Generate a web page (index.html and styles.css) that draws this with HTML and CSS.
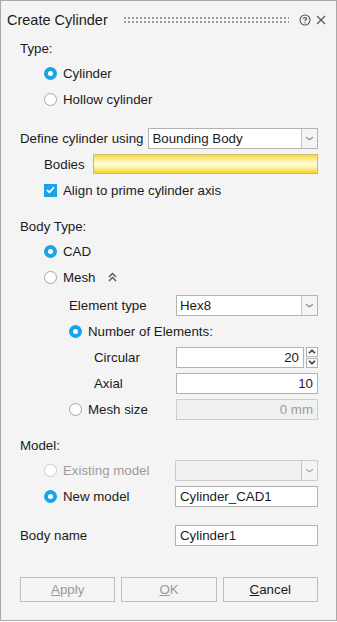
FILE: index.html
```html
<!DOCTYPE html>
<html lang="en">
<head>
    <meta charset="UTF-8" />
    <title>Create Cylinder</title>
    <link rel="stylesheet" href="styles.css">
</head>
<body>
<div class="dialog">
    <div class="titlebar">
        <span class="title">Create Cylinder</span>
        <span class="grip"></span>
        <svg class="help" width="12" height="12" viewBox="0 0 12 12">
            <circle cx="6" cy="6" r="5" fill="none" stroke="#555" stroke-width="1.1"/>
            <path d="M4.3 4.7 C4.3 3.3 7.7 3.3 7.7 4.7 C7.7 5.8 6 5.8 6 7.1" fill="none" stroke="#555" stroke-width="1.1"/>
            <circle cx="6" cy="8.7" r="0.7" fill="#555"/>
        </svg>
        <svg class="close" width="10" height="10" viewBox="0 0 10 10">
            <path d="M1 1 L9 9 M9 1 L1 9" stroke="#555" stroke-width="1.2"/>
        </svg>
    </div>

    <div class="content">
        <div class="heading">Type:</div>
        <div class="row indent"><span class="radio on"></span>Cylinder</div>
        <div class="row indent"><span class="radio"></span>Hollow cylinder</div>

        <div class="row section">
            <span class="lbl-auto">Define cylinder using</span>
            <div class="combo"><span class="value">Bounding Body</span><span class="drop"><svg width="7" height="5" viewBox="0 0 7 5"><path d="M0 0.5 L3.5 3 L7 0.5 L7 2 L3.5 4.5 L0 2Z" fill="#8a8a8a"/></svg></span></div>
        </div>
        <div class="row indent">
            <span class="lbl-bodies">Bodies</span>
            <div class="picker"></div>
        </div>
        <div class="row indent">
            <span class="check"><svg width="9" height="8" viewBox="0 0 9 8"><path d="M1 4 L3.5 6.3 L8 1.3" fill="none" stroke="#fff" stroke-width="1.7"/></svg></span>Align to prime cylinder axis
        </div>

        <div class="heading section">Body Type:</div>
        <div class="row indent"><span class="radio on"></span>CAD</div>
        <div class="row indent"><span class="radio"></span>Mesh
            <svg class="collapse" width="9" height="10" viewBox="0 0 9 10"><path d="M1 5 L4.5 1.6 L8 5 M1 9 L4.5 5.6 L8 9" fill="none" stroke="#555" stroke-width="1.4"/></svg>
        </div>

        <div class="mesh">
            <div class="row sub">
                <span class="lbl-sub">Element type</span>
                <div class="combo"><span class="value">Hex8</span><span class="drop"><svg width="7" height="5" viewBox="0 0 7 5"><path d="M0 0.5 L3.5 3 L7 0.5 L7 2 L3.5 4.5 L0 2Z" fill="#8a8a8a"/></svg></span></div>
            </div>
            <div class="row sub"><span class="radio on"></span>Number of Elements:</div>
            <div class="row sub2">
                <span class="lbl-sub2">Circular</span>
                <div class="input num">20</div>
                <div class="spin">
                    <span class="spin-btn"><svg width="8" height="5" viewBox="0 0 8 5"><path d="M1 4.2 L4 1.2 L7 4.2" fill="none" stroke="#333" stroke-width="1.5"/></svg></span>
                    <span class="spin-btn"><svg width="8" height="5" viewBox="0 0 8 5"><path d="M1 0.8 L4 3.8 L7 0.8" fill="none" stroke="#333" stroke-width="1.5"/></svg></span>
                </div>
            </div>
            <div class="row sub2">
                <span class="lbl-sub2">Axial</span>
                <div class="input num">10</div>
            </div>
            <div class="row sub">
                <span class="radio"></span><span class="lbl-msize">Mesh size</span>
                <div class="input num disabled">0 mm</div>
            </div>
        </div>

        <div class="heading section">Model:</div>
        <div class="row indent muted">
            <span class="radio off"></span><span class="lbl-model">Existing model</span>
            <div class="combo disabled"><span class="value"></span><span class="drop"><svg width="7" height="5" viewBox="0 0 7 5"><path d="M0 0.5 L3.5 3 L7 0.5 L7 2 L3.5 4.5 L0 2Z" fill="#aaa"/></svg></span></div>
        </div>
        <div class="row indent">
            <span class="radio on"></span><span class="lbl-model">New model</span>
            <div class="input">Cylinder_CAD1</div>
        </div>

        <div class="row section">
            <span class="lbl-name">Body name</span>
            <div class="input">Cylinder1</div>
        </div>

        <div class="buttons">
            <button class="btn" disabled><u>A</u>pply</button>
            <button class="btn" disabled><u>O</u>K</button>
            <button class="btn"><u>C</u>ancel</button>
        </div>
    </div>
</div>
</body>
</html>
```

FILE: styles.css
```css
:root {
    --bg: #f4f4f4;
    --text: #1b1b1b;
    --muted: #9c9c9c;
    --accent: #1aa3e8;
    --field-border: #b2b2b2;
}

html, body {
    margin: 0;
    padding: 0;
    background: #fff;
}

body {
    font-family: "Liberation Sans", Arial, sans-serif;
    font-size: 13.3px;
    color: var(--text);
}

.dialog {
    width: 337px;
    height: 621px;
    box-sizing: border-box;
    border: 1px solid #a9a9a9;
    background: var(--bg);
}

/* title bar */
.titlebar {
    height: 37px;
    display: flex;
    align-items: center;
    padding: 0 10px 0 6px;
}

.title {
    font-size: 14.5px;
}

.grip {
    flex: 1;
    height: 8px;
    margin: 0 10px 0 15px;
    background-image: radial-gradient(circle at center, #9b9b9b 0.8px, transparent 1.1px);
    background-size: 4px 4px;
}

.help {
    margin-right: 5px;
}

/* form */
.content {
    padding: 0 18px 0 19px;
}

.heading {
    height: 22px;
    line-height: 22px;
}

.row {
    height: 26px;
    display: flex;
    align-items: center;
}

.section {
    margin-top: 13px;
}

.indent {
    padding-left: 24px;
}

.sub {
    padding-left: 49px;
}

.sub2 {
    padding-left: 74px;
}

.mesh {
    margin-top: 2px;
}

.radio {
    width: 13px;
    height: 13px;
    box-sizing: border-box;
    border: 1px solid #a3a3a3;
    border-radius: 50%;
    background: #fff;
    margin-right: 6px;
    flex: none;
}

.radio.on {
    border: 4px solid var(--accent);
    background: #fff;
}

.radio.off {
    border-color: #cacaca;
}

.check {
    width: 13px;
    height: 13px;
    background: var(--accent);
    margin-right: 6px;
    display: flex;
    align-items: center;
    justify-content: center;
}

.collapse {
    margin-left: 12px;
}

.muted {
    color: var(--muted);
}

/* labels */
.lbl-auto { margin-right: 5px; }
.lbl-bodies { width: 49px; flex: none; }
.lbl-sub { width: 107px; flex: none; }
.lbl-sub2 { width: 82px; flex: none; }
.lbl-msize { width: 88px; flex: none; }
.lbl-model { width: 112px; flex: none; }
.lbl-name { width: 155px; flex: none; }

/* fields */
.input,
.combo {
    flex: 1;
    height: 21px;
    box-sizing: border-box;
    border: 1px solid var(--field-border);
    background: #fff;
    display: flex;
    align-items: center;
    padding: 0 4px;
    white-space: nowrap;
}

.input.num {
    justify-content: flex-end;
}

.input.disabled {
    background: #f1f1f1;
    border-color: #cdcdcd;
    color: #9a9a9a;
}

.combo {
    padding: 0 0 0 3px;
}

.combo .value {
    flex: 1;
}

.combo .drop {
    width: 15px;
    height: 100%;
    border-left: 1px solid #c4c4c4;
    background: #f4f4f4;
    display: flex;
    align-items: center;
    justify-content: center;
}

.combo.disabled {
    background: #f1f1f1;
    border-color: #cdcdcd;
}

.picker {
    flex: 1;
    height: 20px;
    box-sizing: border-box;
    border: 1px solid #cdbb6a;
    background: linear-gradient(to bottom, #f7d93c 0%, #fdf1a6 30%, #fffbe0 50%, #fdf0a0 70%, #f3d22e 100%);
}

.spin {
    margin-left: 2px;
    display: flex;
    flex-direction: column;
    gap: 1px;
}

.spin-btn {
    width: 12px;
    height: 10px;
    box-sizing: border-box;
    border: 1px solid #b5b5b5;
    background: #fafafa;
    display: flex;
    align-items: center;
    justify-content: center;
}

/* buttons */
.buttons {
    margin-top: 29px;
    display: flex;
    gap: 6px;
}

.btn {
    flex: 1;
    height: 25px;
    border: 1px solid #bdbdbd;
    background: #f4f4f4;
    font-family: inherit;
    font-size: 13.3px;
    color: var(--text);
    padding: 0;
}

.btn:disabled {
    color: #9a9a9a;
}
```
